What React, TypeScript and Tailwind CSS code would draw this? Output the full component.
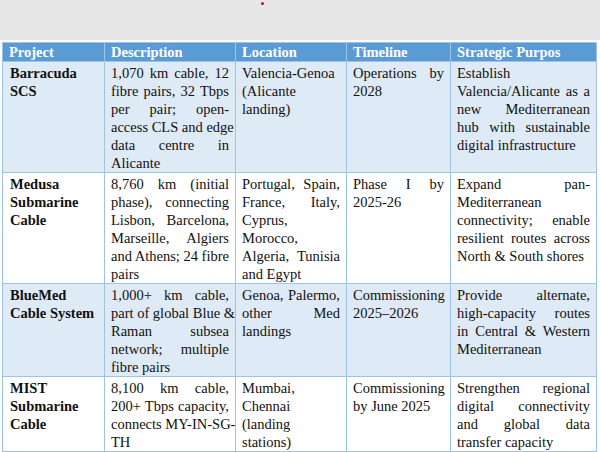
const headers = ["Project", "Description", "Location", "Timeline", "Strategic Purpos"];

// each cell is given as its printed lines so the justified wrapping matches the doc
const rows = [
  {
    project: ["Barracuda", "SCS"],
    cells: [
      ["1,070 km cable, 12", "fibre pairs, 32 Tbps", "per pair; open-", "access CLS and edge", "data centre in", "Alicante"],
      ["Valencia-Genoa", "(Alicante", "landing)"],
      ["Operations by", "2028"],
      ["Establish", "Valencia/Alicante as a", "new Mediterranean", "hub with sustainable", "digital infrastructure"],
    ],
  },
  {
    project: ["Medusa", "Submarine", "Cable"],
    cells: [
      ["8,760 km (initial", "phase), connecting", "Lisbon, Barcelona,", "Marseille, Algiers", "and Athens; 24 fibre", "pairs"],
      ["Portugal, Spain,", "France, Italy,", "Cyprus,", "Morocco,", "Algeria, Tunisia", "and Egypt"],
      ["Phase I by", "2025-26"],
      ["Expand pan-", "Mediterranean", "connectivity; enable", "resilient routes across", "North & South shores"],
    ],
  },
  {
    project: ["BlueMed", "Cable System"],
    cells: [
      ["1,000+ km cable,", "part of global Blue &", "Raman subsea", "network; multiple", "fibre pairs"],
      ["Genoa, Palermo,", "other Med", "landings"],
      ["Commissioning", "2025–2026"],
      ["Provide alternate,", "high-capacity routes", "in Central & Western", "Mediterranean"],
    ],
  },
  {
    project: ["MIST", "Submarine", "Cable"],
    cells: [
      ["8,100 km cable,", "200+ Tbps capacity,", "connects MY-IN-SG-", "TH"],
      ["Mumbai,", "Chennai", "(landing", "stations)"],
      ["Commissioning", "by June 2025"],
      ["Strengthen regional", "digital connectivity", "and global data", "transfer capacity"],
    ],
  },
];

const Lines = ({ lines }: { lines: string[] }) => (
  <>
    {lines.map((line, i) => (
      <div
        key={i}
        className={
          i < lines.length - 1
            ? "whitespace-nowrap text-justify [text-align-last:justify]"
            : "whitespace-nowrap"
        }>
        {line}
      </div>
    ))}
  </>
);

export default function App() {
  return (
    <div className="h-[452px] w-[600px] overflow-hidden bg-white font-['Liberation_Serif',serif] text-[14.5px] leading-[18px] text-[#111]">
      <div className="h-[40px] bg-[#e6e6e6] pl-[261px] pt-[2px]">
        <div className="h-[3px] w-[3px] rounded-full bg-[#e8000b]" />
      </div>

      <div className="ml-[2px] mt-[2px] grid w-[595px] grid-cols-[101px_130px_110px_103px_145px] gap-px bg-[#9dc3e6] p-px">
        {headers.map((h) => (
          <div key={h} className="bg-[#5b9bd5] px-[6px] font-bold text-white">
            {h}
          </div>
        ))}

        {rows.map((row, r) => {
          const bg = r % 2 === 0 ? "bg-[#deeaf6]" : "bg-white";
          return [
            <div key={`${r}-p`} className={`${bg} px-[7px] pt-[2px] font-bold`}>
              <Lines lines={row.project} />
            </div>,
            ...row.cells.map((lines, c) => (
              <div key={`${r}-${c}`} className={`${bg} px-[6px] pt-[2px]`}>
                <Lines lines={lines} />
              </div>
            )),
          ];
        })}
      </div>
    </div>
  );
}
